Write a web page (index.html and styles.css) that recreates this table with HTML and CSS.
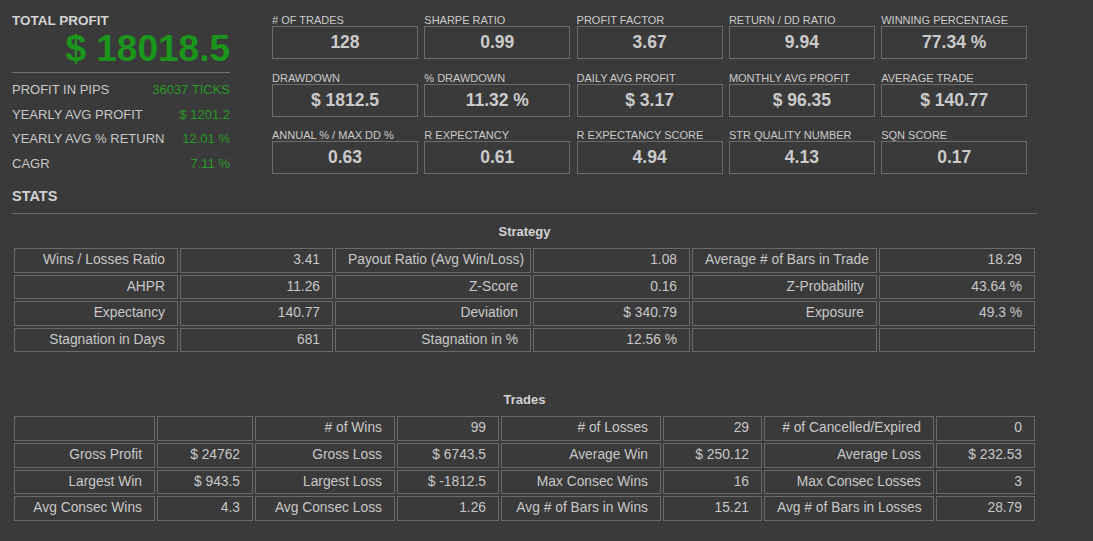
FILE: index.html
```html
<!DOCTYPE html>
<html lang="en">
<head>
<meta charset="utf-8">
<title>Strategy Report</title>
<link rel="stylesheet" href="styles.css">
</head>
<body>
<div class="page">
  <section class="top">
    <div class="summary">
      <div class="summary-title">TOTAL PROFIT</div>
      <div class="summary-total">$ 18018.5</div>
      <div class="summary-rows">
        <div class="summary-row"><span>PROFIT IN PIPS</span><span class="pos">36037 TICKS</span></div>
        <div class="summary-row"><span>YEARLY AVG PROFIT</span><span class="pos">$ 1201.2</span></div>
        <div class="summary-row"><span>YEARLY AVG % RETURN</span><span class="pos">12.01 %</span></div>
        <div class="summary-row"><span>CAGR</span><span class="pos">7.11 %</span></div>
      </div>
    </div>
    <div class="metrics">
      <div class="metric"><div class="metric-label"># OF TRADES</div><div class="metric-value">128</div></div>
      <div class="metric"><div class="metric-label">SHARPE RATIO</div><div class="metric-value">0.99</div></div>
      <div class="metric"><div class="metric-label">PROFIT FACTOR</div><div class="metric-value">3.67</div></div>
      <div class="metric"><div class="metric-label">RETURN / DD RATIO</div><div class="metric-value">9.94</div></div>
      <div class="metric"><div class="metric-label">WINNING PERCENTAGE</div><div class="metric-value">77.34 %</div></div>
      <div class="metric"><div class="metric-label">DRAWDOWN</div><div class="metric-value">$ 1812.5</div></div>
      <div class="metric"><div class="metric-label">% DRAWDOWN</div><div class="metric-value">11.32 %</div></div>
      <div class="metric"><div class="metric-label">DAILY AVG PROFIT</div><div class="metric-value">$ 3.17</div></div>
      <div class="metric"><div class="metric-label">MONTHLY AVG PROFIT</div><div class="metric-value">$ 96.35</div></div>
      <div class="metric"><div class="metric-label">AVERAGE TRADE</div><div class="metric-value">$ 140.77</div></div>
      <div class="metric"><div class="metric-label">ANNUAL % / MAX DD %</div><div class="metric-value">0.63</div></div>
      <div class="metric"><div class="metric-label">R EXPECTANCY</div><div class="metric-value">0.61</div></div>
      <div class="metric"><div class="metric-label">R EXPECTANCY SCORE</div><div class="metric-value">4.94</div></div>
      <div class="metric"><div class="metric-label">STR QUALITY NUMBER</div><div class="metric-value">4.13</div></div>
      <div class="metric"><div class="metric-label">SQN SCORE</div><div class="metric-value">0.17</div></div>
    </div>
  </section>

  <section class="stats">
    <h2 class="stats-title">STATS</h2>

    <div class="block">
      <h3 class="block-title">Strategy</h3>
      <div class="kv-grid strategy-grid">
        <div class="cell">Wins / Losses Ratio</div><div class="cell">3.41</div>
        <div class="cell">Payout Ratio (Avg Win/Loss)</div><div class="cell">1.08</div>
        <div class="cell">Average # of Bars in Trade</div><div class="cell">18.29</div>

        <div class="cell">AHPR</div><div class="cell">11.26</div>
        <div class="cell">Z-Score</div><div class="cell">0.16</div>
        <div class="cell">Z-Probability</div><div class="cell">43.64 %</div>

        <div class="cell">Expectancy</div><div class="cell">140.77</div>
        <div class="cell">Deviation</div><div class="cell">$ 340.79</div>
        <div class="cell">Exposure</div><div class="cell">49.3 %</div>

        <div class="cell">Stagnation in Days</div><div class="cell">681</div>
        <div class="cell">Stagnation in %</div><div class="cell">12.56 %</div>
        <div class="cell"></div><div class="cell"></div>
      </div>
    </div>

    <div class="block block-trades">
      <h3 class="block-title">Trades</h3>
      <div class="kv-grid trades-grid">
        <div class="cell"></div><div class="cell"></div>
        <div class="cell"># of Wins</div><div class="cell">99</div>
        <div class="cell"># of Losses</div><div class="cell">29</div>
        <div class="cell"># of Cancelled/Expired</div><div class="cell">0</div>

        <div class="cell">Gross Profit</div><div class="cell">$ 24762</div>
        <div class="cell">Gross Loss</div><div class="cell">$ 6743.5</div>
        <div class="cell">Average Win</div><div class="cell">$ 250.12</div>
        <div class="cell">Average Loss</div><div class="cell">$ 232.53</div>

        <div class="cell">Largest Win</div><div class="cell">$ 943.5</div>
        <div class="cell">Largest Loss</div><div class="cell">$ -1812.5</div>
        <div class="cell">Max Consec Wins</div><div class="cell">16</div>
        <div class="cell">Max Consec Losses</div><div class="cell">3</div>

        <div class="cell">Avg Consec Wins</div><div class="cell">4.3</div>
        <div class="cell">Avg Consec Loss</div><div class="cell">1.26</div>
        <div class="cell">Avg # of Bars in Wins</div><div class="cell">15.21</div>
        <div class="cell">Avg # of Bars in Losses</div><div class="cell">28.79</div>
      </div>
    </div>
  </section>
</div>
</body>
</html>
```

FILE: styles.css
```css
* {
  box-sizing: border-box;
}

html, body {
  margin: 0;
  padding: 0;
  background: #3a3a3a;
}

body {
  font-family: "Liberation Sans", Arial, sans-serif;
  color: #c8c8c8;
  height: 541px;
  overflow: hidden;
}

.page {
  width: 1025px;
  margin-left: 12px;
  padding-top: 13px;
}

/* ---------- top section ---------- */
.top {
  display: flex;
  gap: 42px;
  align-items: flex-start;
}

.summary {
  width: 218px;
  flex: none;
}

.summary-title {
  font-size: 13.5px;
  font-weight: bold;
  line-height: 16px;
  color: #d2d2d2;
}

.summary-total {
  font-size: 37px;
  font-weight: bold;
  line-height: 40px;
  text-align: right;
  color: #1b951b;
  border-bottom: 1px solid #707070;
  padding-bottom: 3px;
}

.summary-rows {
  margin-top: 5px;
}

.summary-row {
  display: flex;
  justify-content: space-between;
  font-size: 13px;
  line-height: 24.5px;
  white-space: nowrap;
}

.pos {
  color: #289828;
}

.metrics {
  display: grid;
  grid-template-columns: repeat(5, 146px);
  column-gap: 6.3px;
  row-gap: 11.5px;
}

.metric-label {
  font-size: 11px;
  line-height: 12px;
  padding-top: 1px;
  white-space: nowrap;
  color: #cacaca;
}

.metric-value {
  height: 33px;
  border: 1px solid #6c6c6c;
  font-size: 17.5px;
  font-weight: bold;
  line-height: 31px;
  text-align: center;
  color: #cacaca;
}

/* ---------- stats ---------- */
.stats {
  margin-top: 12px;
}

.stats-title {
  margin: 0;
  font-size: 14.5px;
  font-weight: bold;
  line-height: 17px;
  color: #d2d2d2;
  padding-bottom: 8px;
  border-bottom: 1px solid #6a6a6a;
}

.block {
  margin-top: 9.5px;
}

.block-trades {
  margin-top: 38px;
}

.block-title {
  margin: 0 0 7.5px;
  font-size: 13px;
  font-weight: bold;
  line-height: 15px;
  text-align: center;
  color: #d2d2d2;
}

.block-trades .block-title {
  margin-bottom: 7px;
}

.kv-grid {
  display: grid;
  gap: 2px;
  padding: 2px;
  grid-auto-rows: 24.6px;
}

.strategy-grid {
  grid-template-columns: 164px 153px 196px 157px 185px 156px;
}

.trades-grid {
  grid-template-columns: 141px 96px 140px 102px 160px 99px 170px 99px;
}

.cell {
  border: 1px solid #6a6a6a;
  padding: 0 12px;
  font-size: 13.8px;
  line-height: 22.6px;
  text-align: right;
  white-space: nowrap;
  overflow: hidden;
  color: #c8c8c8;
}
```
